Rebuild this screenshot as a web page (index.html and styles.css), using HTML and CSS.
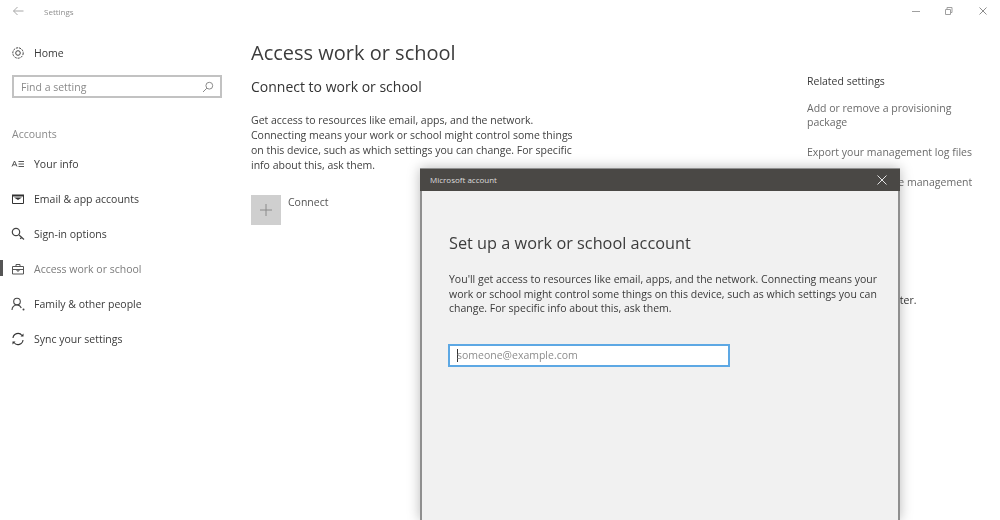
FILE: index.html
```html
<!DOCTYPE html>
<html lang="en">
<head>
<meta charset="utf-8">
<title>Settings</title>
<link rel="stylesheet" href="styles.css">
</head>
<body>
<div class="window">
  <header class="titlebar">
    <svg class="back" width="12" height="10" viewBox="0 0 12 10"><path d="M5.500 1 1.500 5l4 4M1.500 5H11.500" fill="none" stroke="#a8a8a8"/></svg>
    <span class="app-title">Settings</span>
    <div class="controls">
      <svg width="10" height="10" viewBox="0 0 10 10"><path d="M2 5.500H10" stroke="#a0a0a0"/></svg>
      <svg width="10" height="10" viewBox="0 0 10 10"><path d="M1.500 3.500h5v5h-5zM3 3.500V1.500h5v5H6.500" fill="none" stroke="#a0a0a0"/></svg>
      <svg width="10" height="10" viewBox="0 0 10 10"><path d="M1.500 1.500l7 7M8.500 1.500l-7 7" stroke="#8c8c8c"/></svg>
    </div>
  </header>
  <div class="columns">
    <nav class="sidebar">
      <div class="nav-row home">
        <svg class="nav-icon" width="14" height="14" viewBox="0 0 14 14"><g fill="none" stroke="#444"><circle cx="7" cy="7" r="5.200" stroke-dasharray="2.200 .9"/><circle cx="7" cy="7" r="2.300"/></g></svg>
        <span>Home</span>
      </div>
      <div class="search">
        <span>Find a setting</span>
        <svg width="12" height="12" viewBox="0 0 12 12"><g fill="none" stroke="#8a8a8a"><circle cx="7.300" cy="4.700" r="3.400"/><path d="M4.800 7.200 1 11"/></g></svg>
      </div>
      <div class="group-label">Accounts</div>
      <div class="nav-row">
        <svg class="nav-icon" width="14" height="14" viewBox="0 0 14 14"><path d="M1 9.500 3.500 4 6 9.500M2 7.800h3M7.500 4.500h5.500M7.500 7h5.500M7.500 9.500h5.500" fill="none" stroke="#555"/></svg>
        <span>Your info</span>
      </div>
      <div class="nav-row">
        <svg class="nav-icon" width="14" height="14" viewBox="0 0 14 14"><path d="M1.500 3.500h11v8h-11z" fill="none" stroke="#333"/><path d="M1 2.500h12v2H1zM3 5.500h8l-4 2.500z" fill="#333"/></svg>
        <span>Email &amp; app accounts</span>
      </div>
      <div class="nav-row">
        <svg class="nav-icon" width="14" height="14" viewBox="0 0 14 14"><g fill="none" stroke="#444" stroke-width="1.200"><circle cx="5" cy="5" r="3.700"/><path d="M8 8l5 4.500M10.500 10.500l-1.300 1.300"/></g></svg>
        <span>Sign-in options</span>
      </div>
      <div class="nav-row active">
        <svg class="nav-icon" width="14" height="14" viewBox="0 0 14 14"><path d="M1.500 4.500h11v7.500h-11zM5 4.500V2.500h4v2M1.500 7.500h11M6 7.500v1.500h2V7.500" fill="none" stroke="#555"/></svg>
        <span>Access work or school</span>
      </div>
      <div class="nav-row">
        <svg class="nav-icon" width="14" height="14" viewBox="0 0 14 14"><g fill="none" stroke="#444" stroke-width="1.100"><circle cx="6" cy="4.500" r="3.300"/><path d="M1 13c0-3 2-5 5-5 2 0 3.500 1 4.300 3"/></g><circle cx="12.500" cy="12.500" r="1" fill="#444"/></svg>
        <span>Family &amp; other people</span>
      </div>
      <div class="nav-row">
        <svg class="nav-icon" width="14" height="14" viewBox="0 0 14 14"><g fill="none" stroke="#333" stroke-width="1.100"><path d="M2 6a5 5 0 0 1 9-2.500M12 8a5 5 0 0 1-9 2.500"/></g><path d="M9.500 4.500h3v-3zM4.500 9.500h-3v3z" fill="#333"/></svg>
        <span>Sync your settings</span>
      </div>
    </nav>
    <main class="content">
      <h1>Access work or school</h1>
      <h2>Connect to work or school</h2>
      <p class="intro">Get access to resources like email, apps, and the network.<br>Connecting means your work or school might control some things<br>on this device, such as which settings you can change. For specific<br>info about this, ask them.</p>
      <div class="connect">
        <div class="plus"><svg width="12" height="12" viewBox="0 0 12 12"><path d="M6 0v12M0 6h12" stroke="#8a8a8a"/></svg></div>
        <span>Connect</span>
      </div>
    </main>
    <aside class="related">
      <h3>Related settings</h3>
      <p>Add or remove a provisioning<br>package</p>
      <p>Export your management log files</p>
      <p>Enroll only in device management</p>
      <p class="after">Make Windows better.</p>
    </aside>
  </div>
</div>
<section class="dialog">
  <div class="dialog-bar">
    <span>Microsoft account</span>
    <svg width="10" height="10" viewBox="0 0 10 10"><path d="M.5.5l9 9M9.500.5l-9 9" stroke="#e4e4e4"/></svg>
  </div>
  <div class="dialog-body">
    <h2>Set up a work or school account</h2>
    <p>You'll get access to resources like email, apps, and the network. Connecting means your<br>work or school might control some things on this device, such as which settings you can<br>change. For specific info about this, ask them.</p>
    <div class="email"><i class="caret"></i><span>someone@example.com</span></div>
  </div>
</section>
</body>
</html>
```
FILE: styles.css
```css
* { box-sizing: border-box; }
html, body { margin: 0; height: 100%; }
body {
  width: 1000px;
  height: 520px;
  overflow: hidden;
  position: relative;
  background: #fff;
  color: #333;
  font-family: "Open Sans", "Noto Sans", sans-serif;
  font-size: 10.5px;
  filter: blur(0.45px);
}
.titlebar { height: 24px; display: flex; align-items: center; padding: 0 0 2px 12px; }
.back { margin-right: 20px; }
.app-title { font-size: 8px; color: #8f8f8f; }
.controls { margin-left: auto; display: flex; gap: 24px; padding-right: 12px; }
.columns { display: flex; height: 496px; }
.sidebar { width: 251px; flex: none; padding-top: 18px; position: relative; }
.nav-row { height: 35px; display: flex; align-items: center; padding-left: 11px; gap: 9px; color: #3a3a3a; }
.nav-row.home { height: 22px; margin-bottom: 11px; }
.nav-row.active { color: #7c7c7c; position: relative; }
.nav-row.active::before { content: ""; position: absolute; left: 0; top: 9px; width: 3px; height: 16px; background: #555; }
.search { margin-left: 12px; width: 210px; height: 23px; border: 2px solid #c2c2c2; display: flex; align-items: center; justify-content: space-between; padding: 0 6px 0 7px; color: #8a8a8a; }
.group-label { margin: 29px 0 4px 12px; height: 15px; color: #8a8a8a; }
.content { width: 556px; flex: none; }
.content h1 { margin: 15px 0 0; font-size: 20px; font-weight: 400; line-height: 28px; color: #3c3c3c; }
.content h2 { margin: 10px 0 0; font-size: 14px; font-weight: 400; line-height: 20px; color: #333; }
.intro { margin: 16px 0 0; line-height: 15px; color: #3f3f3f; white-space: nowrap; }
.connect { margin-top: 22px; display: flex; gap: 7px; color: #555; }
.plus { width: 30px; height: 30px; background: #cfcfcf; display: flex; align-items: center; justify-content: center; }
.related { flex: 1; padding-top: 50px; color: #6a6a6a; min-width: 0; }
.related h3 { margin: 0 0 12px; font-size: 10.5px; font-weight: 400; line-height: 15px; color: #3a3a3a; }
.related p { margin: 0 0 16px; line-height: 14px; white-space: nowrap; }
.related .after { margin: 104px 0 0; color: #333; }
.dialog { position: absolute; left: 420px; top: 168px; width: 480px; height: 352px; border: 2px solid #8f8f8f; border-bottom: 0; background: #f1f1f1; box-shadow: 0 0 12px rgba(0,0,0,.28); }
.dialog-bar { height: 22px; margin: -1px -2px 0; background: #4a4845; color: #ddd; font-size: 8px; display: flex; align-items: center; justify-content: space-between; padding: 0 13px 0 10px; }
.dialog-bar span { margin-bottom: 2px; }
.dialog-body { padding: 0 0 0 26px; }
.dialog-body h2 { margin: 38px 0 0 1px; font-size: 16.3px; font-weight: 400; line-height: 28px; color: #3c3c3c; }
.dialog-body p { margin: 15px 0 0 1px; line-height: 14.5px; color: #3a3a3a; white-space: nowrap; }
.email { margin-top: 28px; width: 282px; height: 23px; border: 2px solid #5da8e4; background: #fff; display: flex; align-items: center; padding-left: 7px; color: #8d8d8d; }
.caret { width: 1px; height: 13px; background: #333; flex: none; }
.email span { margin-left: -1px; }
```
